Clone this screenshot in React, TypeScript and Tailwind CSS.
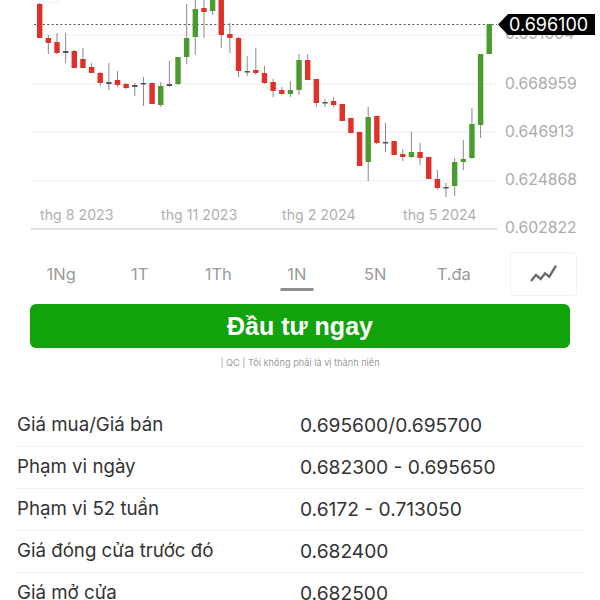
// x is computed from the index, values are y pixels: wickTop, wickBottom, bodyTop, bodyBottom
type Candle = [number, number, number, number, "r" | "g" | "d"];

const candles: Candle[] = [
  [3, 38, 4, 38, "r"],
  [35, 54, 38, 43, "r"],
  [33, 54, 42, 53, "r"],
  [33, 63, 51, 53, "d"],
  [50, 68, 51, 68, "r"],
  [48, 68, 59, 68, "r"],
  [63, 73, 67, 73, "r"],
  [72, 86, 73, 83, "r"],
  [63, 90, 82, 84, "d"],
  [71, 87, 80, 85, "r"],
  [83, 89, 84, 88, "r"],
  [83, 96, 85, 87, "d"],
  [77, 106, 83, 84, "d"],
  [83, 104, 83, 104, "r"],
  [82, 107, 86, 105, "g"],
  [61, 87, 84, 86, "d"],
  [57, 85, 57, 84, "g"],
  [4, 64, 38, 57, "g"],
  [0, 55, 9, 37, "g"],
  [0, 38, 8, 12, "r"],
  [0, 15, 0, 11, "g"],
  [0, 48, 0, 35, "r"],
  [23, 53, 34, 38, "r"],
  [37, 77, 38, 71, "r"],
  [56, 76, 71, 72, "d"],
  [48, 75, 70, 73, "r"],
  [66, 84, 73, 83, "r"],
  [79, 97, 82, 91, "r"],
  [87, 95, 90, 94, "r"],
  [81, 97, 90, 94, "g"],
  [54, 95, 60, 90, "g"],
  [54, 80, 60, 80, "r"],
  [79, 107, 79, 103, "r"],
  [99, 107, 102, 103, "d"],
  [97, 107, 101, 105, "r"],
  [104, 121, 104, 121, "r"],
  [118, 133, 118, 133, "r"],
  [132, 166, 132, 166, "r"],
  [107, 181, 117, 162, "g"],
  [116, 144, 116, 143, "r"],
  [123, 152, 142, 143, "d"],
  [141, 155, 141, 155, "r"],
  [149, 161, 154, 157, "r"],
  [132, 158, 152, 157, "g"],
  [143, 165, 152, 158, "r"],
  [157, 179, 157, 179, "r"],
  [170, 190, 179, 188, "r"],
  [183, 197, 187, 188, "d"],
  [158, 196, 162, 186, "g"],
  [140, 170, 159, 162, "g"],
  [108, 159, 124, 158, "g"],
  [54, 138, 54, 125, "g"],
  [24, 54, 24, 54, "g"],
];

const bodyColor = { r: "#e0302a", g: "#4b9c2e", d: "#555555" };

const gridLines = [35, 84, 132, 181];
const prices = [
  ["0.668959", 88.5],
  ["0.646913", 136.5],
  ["0.624868", 185],
  ["0.602822", 233],
] as const;
const months = [
  ["thg 8 2023", 40],
  ["thg 11 2023", 161],
  ["thg 2 2024", 282],
  ["thg 5 2024", 403],
] as const;

const tabs = ["1Ng", "1T", "1Th", "1N", "5N", "T.đa"];

const rows = [
  ["Giá mua/Giá bán", "0.695600/0.695700"],
  ["Phạm vi ngày", "0.682300 - 0.695650"],
  ["Phạm vi 52 tuần", "0.6172 - 0.713050"],
  ["Giá đóng cửa trước đó", "0.682400"],
  ["Giá mở cửa", "0.682500"],
];

function Chart() {
  return (
    <svg width={600} height={246} className="block" style={{ fontFamily: "Inter, sans-serif" }}>
      <circle cx={50} cy={-12} r={15} fill="none" stroke="#eeeeee" />
      {gridLines.map((y) => (
        <line key={y} x1={31} x2={497} y1={y} y2={y} stroke="#ececec" strokeWidth={1.2} />
      ))}
      <line x1={31} x2={497} y1={229} y2={229} stroke="#d9d9d9" strokeWidth={1.6} />
      <line x1={34} x2={497} y1={24.5} y2={24.5} stroke="#555555" strokeDasharray="2 2.4" />
      {candles.map(([wt, wb, bt, bb, c], i) => {
        const x = 39.7 + i * 8.645;
        return (
          <g key={i}>
            <line x1={x} x2={x} y1={wt} y2={wb} stroke="#8a8a8a" strokeWidth={1} />
            <rect x={x - 2.7} y={bt} width={5.4} height={Math.max(bb - bt, 1.5)} fill={bodyColor[c]} />
          </g>
        );
      })}
      {months.map(([label, x]) => (
        <text key={label} x={x} y={220} fontSize={14.2} fill="#b0b0b0">
          {label}
        </text>
      ))}
      <text x={505} y={39} fontSize={15.7} fill="#ababab">
        0.691004
      </text>
      {prices.map(([label, y]) => (
        <text key={label} x={505} y={y} fontSize={15.7} fill="#ababab">
          {label}
        </text>
      ))}
      <polygon points="498,24.5 508,14 595,14 595,35 508,35" fill="#000000" />
      <text x={509} y={31} fontSize={18} fill="#ffffff">
        0.696100
      </text>
    </svg>
  );
}

export default function App() {
  return (
    <div className="w-[600px] h-[600px] overflow-hidden bg-white font-['Inter',sans-serif]">
      <Chart />

      <div className="flex items-center pl-[22px] pr-[23px] h-[44px] mt-[6px]">
        <div className="flex flex-1">
          {tabs.map((tab) => (
            <div key={tab} className="relative flex-1 text-center text-[16.5px] text-[#9a9a9a]">
              {tab}
              {tab === "1N" && (
                <div className="absolute left-1/2 -translate-x-1/2 top-[26px] w-[33px] h-[3px] bg-[#8f8f8f]" />
              )}
            </div>
          ))}
        </div>
        <div className="w-[67px] h-[44px] ml-[17px] flex items-center justify-center rounded border border-[#f2f2f2]">
          <svg width={27} height={18} viewBox="0 0 27 18" fill="none" stroke="#6a6a6a" strokeWidth={2.3}>
            <path d="M1 16 L6 10 L10.7 14 L15 8.3 L19.3 11.7 L26 0.7" />
          </svg>
        </div>
      </div>

      <div className="mx-[30px] mt-[8px] h-[44px] pt-[2px] rounded-md bg-[#12a30c] flex items-center justify-center text-white font-bold text-[25px] font-['Liberation_Sans',sans-serif]">
        Đầu tư ngay
      </div>

      <div className="mt-[9px] text-center text-[9.2px] leading-[12px] text-[#9c9c9c]">
        | QC | Tôi không phải là vị thành niên
      </div>

      <div className="mt-[36px] mx-[16px]">
        {rows.map(([label, value]) => (
          <div key={label} className="flex items-center h-[42px] border-b border-[#f4f4f4] text-[#333333]">
            <div className="w-[284px] pl-[1px] text-[18.7px]">{label}</div>
            <div className="text-[19.2px]">{value}</div>
          </div>
        ))}
      </div>
    </div>
  );
}
